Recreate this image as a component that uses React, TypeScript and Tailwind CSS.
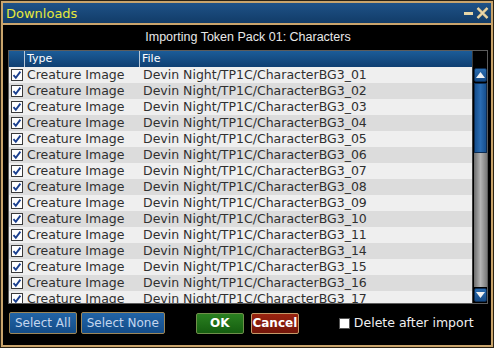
import React from 'react';

const files = ['01', '02', '03', '04', '05', '06', '07', '08', '09', '10', '11', '14', '15', '16', '17'];

const Check: React.FC = () => (
  <svg width="12" height="12" viewBox="0 0 12 12" className="block">
    <rect x="0.5" y="0.5" width="11" height="11" fill="#ffffff" stroke="#3a3a3a" />
    <path d="M2.5 6.2 L4.8 8.8 L9.4 2.6" fill="none" stroke="#1a3f8f" strokeWidth="1.9" />
  </svg>
);

const ScrollButton: React.FC<{ up?: boolean }> = ({ up }) => (
  <div className="w-[13px] h-[14px] mx-auto rounded-[2px] bg-gradient-to-b from-[#2a6cb0] to-[#154a86] border border-[#0c2c52] flex items-center justify-center">
    <svg width="9" height="6" viewBox="0 0 9 6">
      {up ? <path d="M0 6 L4.5 0 L9 6 Z" fill="#f2f2f2" /> : <path d="M0 0 L4.5 6 L9 0 Z" fill="#f2f2f2" />}
    </svg>
  </div>
);

export default function App() {
  return (
    <div className="w-[494px] h-[348px] bg-[#2a2214] p-px" style={{ fontFamily: '"DejaVu Sans", Verdana, sans-serif' }}>
      <div className="w-full h-full border-2 border-[#c9a46c] flex flex-col bg-black">
        {/* title bar */}
        <div className="h-[20px] bg-gradient-to-b from-[#1e5288] to-[#123c68] flex items-center justify-between pl-[3px] pr-[2px] shrink-0">
          <span className="text-[13px] leading-none text-[#e6e83c]">Downloads</span>
          <div className="flex items-center gap-[3px]">
            <div className="w-[9px] h-[3px] bg-[#e6d6a8] mt-[1px]" />
            <svg width="13" height="12" viewBox="0 0 13 12">
              <path d="M1.5 1 L11.5 11 M11.5 1 L1.5 11" stroke="#d8c08a" strokeWidth="2.6" />
              <path d="M1.5 1 L11.5 11 M11.5 1 L1.5 11" stroke="#f4e8c4" strokeWidth="1" />
            </svg>
          </div>
        </div>
        <div className="h-[2px] bg-[#c9a46c] shrink-0" />

        {/* body */}
        <div className="flex-1 flex flex-col pl-[5px] pr-[3px]">
          <div className="h-[25px] pt-[4px] text-center text-[12px] leading-[16px] text-[#e8e8e8]" style={{ fontFamily: '"Liberation Sans", Arial, sans-serif', fontSize: '12.5px' }}>
            Importing Token Pack 01: Characters
          </div>

          {/* table */}
          <div className="h-[254px] border border-[#5c5c5c] flex overflow-hidden">
            <div className="flex-1 flex flex-col bg-[#e8e8e8]">
              <div className="h-[16px] shrink-0 flex bg-gradient-to-b from-[#1c5c98] to-[#0f3f72] text-white text-[11px] leading-[16px]">
                <div className="w-[16px] border-r border-[#b8c8d8]" />
                <div className="w-[115px] pl-[2px] border-r border-[#b8c8d8]">Type</div>
                <div className="flex-1 pl-[2px]">File</div>
              </div>
              {files.map((n, i) => (
                <div
                  key={n}
                  className={`h-[16px] shrink-0 flex items-center text-[#303030] leading-[16px] ${i % 2 === 0 ? 'bg-[#efefef]' : 'bg-[#dcdcdc]'}`}
                  style={{ fontSize: '12.5px' }}
                >
                  <div className="w-[17px] pl-[2px]">
                    <Check />
                  </div>
                  <div className="w-[115px] pl-px whitespace-nowrap overflow-hidden">Creature Image</div>
                  <div className="flex-1 pl-[2px] whitespace-nowrap overflow-hidden">Devin Night/TP1C/CharacterBG3_{n}</div>
                </div>
              ))}
            </div>

            {/* scrollbar */}
            <div className="w-[15px] shrink-0 flex flex-col bg-black border-l border-[#3a3a3a]">
              <div className="h-[17px] shrink-0" />
              <ScrollButton up />
              <div className="flex-1 mx-auto w-[13px] mt-[1px] mb-[1px] flex flex-col bg-gradient-to-r from-[#6e6e6e] via-[#b4b4b4] to-[#7a7a7a]">
                <div className="h-[70px] bg-gradient-to-r from-[#164f8e] via-[#2a6cb2] to-[#164f8e] border border-[#0c2c52]" />
              </div>
              <ScrollButton />
              <div className="h-[1px] shrink-0" />
            </div>
          </div>

          {/* footer */}
          <div className="flex items-center mt-[8px] h-[22px]">
            <button className="h-[22px] px-[5px] ml-px rounded-[2px] border border-[#9c8658] bg-gradient-to-b from-[#2264a6] to-[#134c88] text-[12px] text-[#c4d6ee]">
              Select All
            </button>
            <button className="h-[22px] px-[5px] ml-[4px] rounded-[2px] border border-[#9c8658] bg-gradient-to-b from-[#2264a6] to-[#134c88] text-[12px] text-[#c4d6ee]">
              Select None
            </button>
            <button className="h-[21px] w-[48px] ml-[31px] rounded-[2px] border border-[#6f8f4a] bg-gradient-to-b from-[#2a8020] to-[#155e10] text-[12px] font-bold text-white">
              OK
            </button>
            <button className="h-[21px] w-[48px] ml-[7px] rounded-[2px] border border-[#c49a68] bg-gradient-to-b from-[#9a2410] to-[#74160a] text-[12px] font-bold text-white">
              Cancel
            </button>
            <div className="ml-[40px] w-[11px] h-[11px] bg-white border border-[#555]" />
            <span className="ml-[4px] text-[#f0f0f0]" style={{ fontSize: '12.5px' }}>
              Delete after import
            </span>
          </div>
        </div>
      </div>
    </div>
  );
}
